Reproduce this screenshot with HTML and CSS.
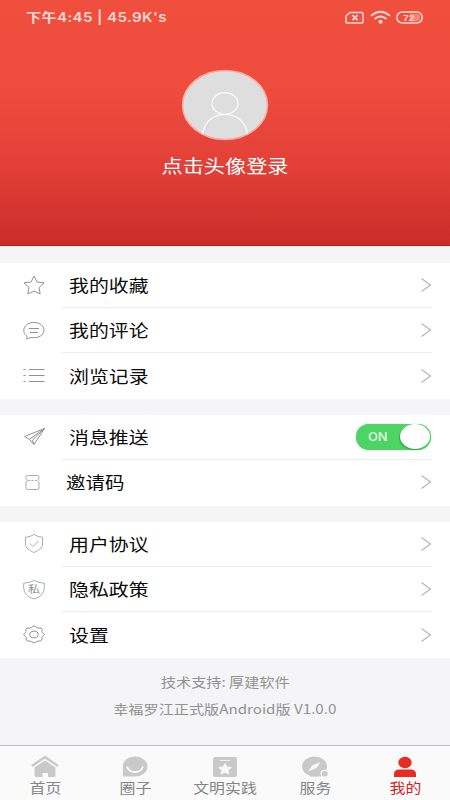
FILE: index.html
```html
<!DOCTYPE html>
<html lang="zh-CN">
<head>
<meta charset="utf-8">
<title>我的</title>
<link rel="stylesheet" href="styles.css">
</head>
<body>
<main class="app">
  <header class="hero">
    <div class="status">
      <span class="clock">下午4:45 | 45.9K's</span>
      <svg class="status-icons" width="80" height="16" viewBox="0 0 80 16" fill="none" stroke="#ffd9d1" stroke-width="1.5">
        <path d="M5 3.500H17q1 0 1 1v8.500q0 1-1 1H2q-1 0-1-1V7z"/><path d="M7.500 6.200l5 5m0-5l-5 5" stroke-width="1.800"/>
        <path d="M26 6.800q9.500-8 19 0M29.500 10q6-5 12 0" stroke-width="2"/><circle cx="35.500" cy="12.800" r="2" fill="#ffd9d1" stroke="none"/>
        <rect x="51.800" y="3" width="25.500" height="11" rx="5.500"/><path d="M65 4.800h6.500a3.700 3.700 0 0 1 0 7.400H65z" fill="#ffd9d1" fill-opacity=".4" stroke="none"/>
        <text x="58" y="11.800" class="battery" textLength="11.500" lengthAdjust="spacingAndGlyphs">72</text>
      </svg>
    </div>
    <svg class="avatar" width="88" height="72" viewBox="0 0 88 72">
      <defs><clipPath id="face"><ellipse cx="44" cy="36" rx="42.500" ry="34.500"/></clipPath></defs>
      <ellipse cx="44" cy="36" rx="42.500" ry="34.500" fill="#dedede" stroke="#f9aaa2" stroke-width="1.500"/>
      <g fill="none" stroke="#fff" stroke-width="1.200" clip-path="url(#face)"><ellipse cx="44" cy="34.500" rx="13" ry="10.800"/><path d="M22 66v-3c2-11 11-17.500 22-17.500S64 52 66 63v3"/></g>
    </svg>
    <a class="login"><span class="wide">点击头像登录</span></a>
  </header>

  <section class="group">
    <div class="row"><svg class="icon" viewBox="0 0 24 24"><path d="M12 3l3 6 7 .8-5 4.700 1.200 6.500-6.200-3-6.200 3L7 14.500 2 9.800 9 9z"/></svg><div class="cell"><span class="wide">我的收藏</span><svg class="arrow" viewBox="0 0 12 16"><path d="M1.500 1.500L10.500 8l-9 6.500"/></svg></div></div>
    <div class="row"><svg class="icon" viewBox="0 0 24 24"><path d="M5 17.300C-1 13 1.500 3.500 12 3.500c13 0 13.500 15 0 15.200q-2 0-3-.3L4.700 20zM7 9.500h10M8 13.500h8"/></svg><div class="cell"><span class="wide">我的评论</span><svg class="arrow" viewBox="0 0 12 16"><path d="M1.500 1.500L10.500 8l-9 6.500"/></svg></div></div>
    <div class="row"><svg class="icon" viewBox="0 0 24 24"><path d="M7 5.500h15.500M7 11.500h15.500M7 17.500h15.500M1.500 5.500h2M1.500 11.500h2M1.500 17.500h2"/></svg><div class="cell"><span class="wide">浏览记录</span><svg class="arrow" viewBox="0 0 12 16"><path d="M1.500 1.500L10.500 8l-9 6.500"/></svg></div></div>
  </section>

  <section class="group">
    <div class="row"><svg class="icon" viewBox="0 0 24 24"><path d="M22.500 3.500L2.500 11.500l5 2.800 4.500 5.200zM22.500 3.500L7.500 14.300M22.500 3.500L10.500 15l1.500 4.500"/></svg><div class="cell"><span class="wide">消息推送</span><span class="switch"><b>ON</b><i class="knob"></i></span></div></div>
    <div class="row"><svg class="icon light" viewBox="0 0 24 24"><path d="M5.500 4.500h10q1.500 0 1.500 1.500v1.500q-3 1.700 0 3.500v6q0 1.500-1.500 1.500h-10Q4 18.500 4 17v-6q3-1.800 0-3.500V6q0-1.500 1.500-1.500z"/><path d="M6 9.500h9" stroke-dasharray="2 1.300"/></svg><div class="cell invite"><span class="wide">邀请码</span><svg class="arrow" viewBox="0 0 12 16"><path d="M1.500 1.500L10.500 8l-9 6.500"/></svg></div></div>
  </section>

  <section class="group">
    <div class="row"><svg class="icon light" viewBox="0 0 24 24"><path d="M12 2.500q4 2.500 8.500 2.700V12c0 4-4 6.500-8.500 8.500-4.500-2-8.500-4.500-8.500-8.500V5.200Q8 5 12 2.500zM8 11.500l3 3 5.500-5.500"/></svg><div class="cell"><span class="wide">用户协议</span><svg class="arrow" viewBox="0 0 12 16"><path d="M1.500 1.500L10.500 8l-9 6.500"/></svg></div></div>
    <div class="row"><svg class="icon light" viewBox="0 0 24 24"><path d="M12 2.500q5 2.500 10.300 2.700C22.800 14 21 18 12 21 3 18 1.200 14 1.700 5.200Q7 5 12 2.500z"/><text class="seal" x="6" y="15.300" textLength="12" lengthAdjust="spacingAndGlyphs">私</text></svg><div class="cell"><span class="wide">隐私政策</span><svg class="arrow" viewBox="0 0 12 16"><path d="M1.500 1.500L10.500 8l-9 6.500"/></svg></div></div>
    <div class="row"><svg class="icon" viewBox="0 0 24 24"><path d="M12 3q1.500 0 2.500 1.500 2 1 4.500.5l1.300 1.500q-1 2 .2 3.300l2 1.700-2 2q-1.500 1-.5 3.300L18.500 18q-2.500-.3-4 .7L12 20l-2.500-1.300q-1.500-1-4-.7L4 16.800q1-2.300-.5-3.300l-2-2 2-1.700Q4.700 8.500 3.700 6.500L5 5q2.500.5 4.500-.5Q10.500 3 12 3z"/><ellipse cx="12" cy="11.500" rx="4.200" ry="3.300"/></svg><div class="cell"><span class="wide">设置</span><svg class="arrow" viewBox="0 0 12 16"><path d="M1.500 1.500L10.500 8l-9 6.500"/></svg></div></div>
  </section>

  <footer class="about">
    <p><span class="wide">技术支持: 厚建软件</span></p>
    <p><span class="wide">幸福罗江正式版Android版 V1.0.0</span></p>
  </footer>

  <nav class="tabs">
    <a class="tab"><svg width="30" height="24" viewBox="0 0 30 24"><path d="M2 11L15 2l13 9" fill="none" stroke="#c9c9c9" stroke-width="2.500"/><path d="M4.500 12.500L15 5.500l10.500 7V20q0 2-2 2H18v-4h-5.500v4H6.500q-2 0-2-2z"/></svg><span class="wide">首页</span></a>
    <a class="tab"><svg width="30" height="24" viewBox="0 0 30 24"><path d="M2.800 21.500V11.500C2.800 5.500 8.300 1.500 15 1.500S27.500 6 27.500 11.500 22 21.500 15 21.500z"/><path d="M7 11.500q1.500 5.500 8 5.500t8-5.500" fill="none" stroke="#fafafa" stroke-width="1.800"/></svg><span class="wide">圈子</span></a>
    <a class="tab"><svg width="30" height="24" viewBox="0 0 30 24"><path d="M5 2h20q2 0 2 2v16q0 2-2 2H5q-2 0-2-2V4q0-2 2-2z"/><path d="M10 5.500h10M15 8.300l1.800 3.600 4.700.5-3.500 2.800 1 4-4-2-4 2 1-4-3.500-2.800 4.700-.5z" fill="#fafafa" stroke="#fafafa" stroke-width=".8"/></svg><span class="wide">文明实践</span></a>
    <a class="tab"><svg width="30" height="24" viewBox="0 0 30 24"><ellipse cx="14.500" cy="11.500" rx="12.500" ry="10"/><path d="M10 19h11v2.500H10z"/><ellipse cx="24.500" cy="18.500" rx="4" ry="3.700" fill="#fafafa"/><ellipse cx="24.700" cy="18.800" rx="3" ry="2.700"/><path d="M20.500 7l-4 6-8.500 3.500 4-6z" fill="#fafafa"/></svg><span class="wide">服务</span></a>
    <a class="tab active"><svg width="30" height="24" viewBox="0 0 30 24"><ellipse cx="15" cy="7.500" rx="6.700" ry="5.700"/><path d="M4 22v-3q0-4.500 5.500-4.500h11Q26 14.500 26 19v3z"/></svg><span class="wide">我的</span></a>
  </nav>
</main>
</body>
</html>
```

FILE: styles.css
```css
* { box-sizing: border-box; }
body { margin: 0; font-family: "Noto Sans CJK SC", sans-serif; }
.app { width: 450px; height: 800px; display: flex; flex-direction: column; background: #f5f5f7; overflow: hidden; }
.wide { display: inline-block; white-space: nowrap; transform: scaleX(1.176); }

.hero { height: 246px; display: flex; flex-direction: column; align-items: center; border-bottom: 1px solid #b9201d; background: linear-gradient(#f04f3e, #ee4c3c 35%, #e5433a 62%, #cb2c28); }
.status { width: 100%; height: 70px; padding: 9px 24px 0 26px; display: flex; justify-content: space-between; }
.clock { height: 18px; font: 600 13px/17px Inter, "Noto Sans CJK SC", sans-serif; letter-spacing: .3px; color: #ffd9d1; transform: scaleX(1.165); transform-origin: left; white-space: pre; }
.status-icons { margin-right: 1px; }
.battery { font: bold 9px "Liberation Sans", sans-serif; fill: #ffd9d1; stroke: none; }
.avatar { display: block; margin-top: -1px; }
.login { margin-top: 12px; font-size: 18px; line-height: 24px; color: #fff; }

.group { flex: none; margin-top: 16px; background: #fff; }
.hero + .group { margin-top: 16.6px; }
.row { height: 45.4px; display: flex; align-items: center; padding-left: 22px; }
.icon { width: 24px; height: 24px; flex: none; fill: none; stroke: #929292; stroke-width: 1; }
.icon.light { stroke: #ababab; }
.seal { font-size: 10px; fill: #929292; stroke: none; }
.cell { flex: 1; height: 100%; margin: 0 18px 0 16px; padding-left: 7px; display: flex; align-items: center; justify-content: space-between; border-bottom: 1px solid #ececee; font-size: 16.5px; line-height: 24px; color: #0b0b0b; }
.row:last-child .cell { border-bottom-color: transparent; }
.cell .wide { transform: scaleX(1.205); transform-origin: left; }
.invite { padding-left: 3.500px; }
.invite .wide { transform: scaleX(1.18); }
.arrow { width: 12px; height: 16px; fill: none; stroke: #b5b5b5; stroke-width: 1.2; }
.switch { width: 75px; height: 26px; margin-right: 1px; border-radius: 13px; background: #4cd564; display: flex; align-items: center; justify-content: space-between; padding: 0 1px 0 12px; box-shadow: 0 0 1px #4cd564; }
.switch b { font: 500 11.5px/14px Inter, sans-serif; color: #e5ffe8; transform: scaleX(1.12); transform-origin: left; }
.knob { width: 30px; height: 25px; border-radius: 50%; background: #fff; box-shadow: -1px 1px 1px #3aa14c; }

.about { padding-top: 10px; text-align: center; color: #929292; font-size: 13px; }
.about p { margin: 0; height: 27px; line-height: 27px; }
.about .wide { transform: scaleX(1.165); }

.tabs { margin-top: auto; height: 55px; flex: none; border-top: 1px solid #bdbdc0; background: #fafafb; display: grid; grid-template-columns: repeat(5, 1fr); }
.tab { display: flex; flex-direction: column; align-items: center; padding-top: 9px; color: #858585; font-size: 13.5px; line-height: 16px; fill: #c9c9c9; }
.tab svg { flex: none; display: block; }
.tab.active { color: #d2231e; fill: #e72c22; }
```
